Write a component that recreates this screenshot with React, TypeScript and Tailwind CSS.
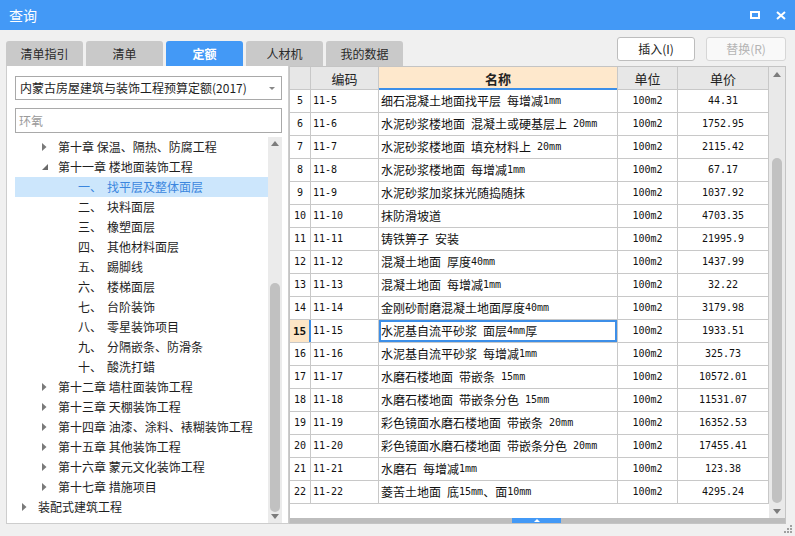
import React from "react";

const rows: [number, string, string, string][] = [
  [5, "11-5", "细石混凝土地面找平层 每增减1mm", "44.31"],
  [6, "11-6", "水泥砂浆楼地面 混凝土或硬基层上 20mm", "1752.95"],
  [7, "11-7", "水泥砂浆楼地面 填充材料上 20mm", "2115.42"],
  [8, "11-8", "水泥砂浆楼地面 每增减1mm", "67.17"],
  [9, "11-9", "水泥砂浆加浆抹光随捣随抹", "1037.92"],
  [10, "11-10", "抹防滑坡道", "4703.35"],
  [11, "11-11", "铸铁箅子 安装", "21995.9"],
  [12, "11-12", "混凝土地面 厚度40mm", "1437.99"],
  [13, "11-13", "混凝土地面 每增减1mm", "32.22"],
  [14, "11-14", "金刚砂耐磨混凝土地面厚度40mm", "3179.98"],
  [15, "11-15", "水泥基自流平砂浆 面层4mm厚", "1933.51"],
  [16, "11-16", "水泥基自流平砂浆 每增减1mm", "325.73"],
  [17, "11-17", "水磨石楼地面 带嵌条 15mm", "10572.01"],
  [18, "11-18", "水磨石楼地面 带嵌条分色 15mm", "11531.07"],
  [19, "11-19", "彩色镜面水磨石楼地面 带嵌条 20mm", "16352.53"],
  [20, "11-20", "彩色镜面水磨石楼地面 带嵌条分色 20mm", "17455.41"],
  [21, "11-21", "水磨石 每增减1mm", "123.38"],
  [22, "11-22", "菱苦土地面 底15mm、面10mm", "4295.24"],
];

type TreeRow =
  | { kind: "chapter"; label: string; open?: boolean }
  | { kind: "sub"; num: string; label: string; selected?: boolean }
  | { kind: "root"; label: string };

const tree: TreeRow[] = [
  { kind: "chapter", label: "第十章 保温、隔热、防腐工程" },
  { kind: "chapter", label: "第十一章 楼地面装饰工程", open: true },
  { kind: "sub", num: "一、", label: "找平层及整体面层", selected: true },
  { kind: "sub", num: "二、", label: "块料面层" },
  { kind: "sub", num: "三、", label: "橡塑面层" },
  { kind: "sub", num: "四、", label: "其他材料面层" },
  { kind: "sub", num: "五、", label: "踢脚线" },
  { kind: "sub", num: "六、", label: "楼梯面层" },
  { kind: "sub", num: "七、", label: "台阶装饰" },
  { kind: "sub", num: "八、", label: "零星装饰项目" },
  { kind: "sub", num: "九、", label: "分隔嵌条、防滑条" },
  { kind: "sub", num: "十、", label: "酸洗打蜡" },
  { kind: "chapter", label: "第十二章 墙柱面装饰工程" },
  { kind: "chapter", label: "第十三章 天棚装饰工程" },
  { kind: "chapter", label: "第十四章 油漆、涂料、裱糊装饰工程" },
  { kind: "chapter", label: "第十五章 其他装饰工程" },
  { kind: "chapter", label: "第十六章 蒙元文化装饰工程" },
  { kind: "chapter", label: "第十七章 措施项目" },
  { kind: "root", label: "装配式建筑工程" },
];

const tabs = ["清单指引", "清单", "定额", "人材机", "我的数据"];

// ascii runs get a fixed-width face, like the SimSun half-width glyphs in the grid
function Mono({ text }: { text: string }) {
  const parts = text.split(/([\x20-\x7e]+)/).filter((p) => p.length > 0);
  return (
    <>
      {parts.map((p, i) =>
        /^[\x20-\x7e]+$/.test(p) ? (
          <span key={i} className="whitespace-pre font-['DejaVu_Sans_Mono',monospace] text-[10px]">
            {p}
          </span>
        ) : (
          <span key={i}>{p}</span>
        )
      )}
    </>
  );
}

function ArrowRight() {
  return (
    <svg width="5" height="8" viewBox="0 0 5 8">
      <path d="M0 0L4.5 4L0 8Z" fill="#7a7a7a" />
    </svg>
  );
}

function ArrowOpen() {
  return (
    <svg width="6" height="6" viewBox="0 0 6 6">
      <path d="M6 0L6 6L0 6Z" fill="#6a6a6a" />
    </svg>
  );
}

function TriUp({ color = "#7c7c7c" }: { color?: string }) {
  return (
    <svg width="8" height="5" viewBox="0 0 8 5">
      <path d="M0 5L4 0L8 5Z" fill={color} />
    </svg>
  );
}

function TriDown() {
  return (
    <svg width="8" height="5" viewBox="0 0 8 5">
      <path d="M0 0L8 0L4 5Z" fill="#7c7c7c" />
    </svg>
  );
}

function TreeItem({ row }: { row: TreeRow }) {
  if (row.kind === "sub") {
    return (
      <div
        className={`flex h-[20px] items-center pl-[63px] ${
          row.selected ? "bg-[#cce6fc] text-[#3b86de]" : "text-[#1e1e1e]"
        }`}
      >
        <span className="inline-block w-[29px]">{row.num}</span>
        <span>{row.label}</span>
      </div>
    );
  }
  const isRoot = row.kind === "root";
  return (
    <div className={`flex h-[20px] items-center ${isRoot ? "pl-[7px]" : "pl-[27px]"}`}>
      <span className="flex w-[16px] items-center">
        {row.kind === "chapter" && row.open ? <ArrowOpen /> : <ArrowRight />}
      </span>
      <span className="whitespace-pre">{row.label}</span>
    </div>
  );
}

export default function App() {
  return (
    <div className="relative flex h-[536px] w-[795px] flex-col overflow-hidden bg-[#f0f0f0] font-['Noto_Sans_CJK_SC',sans-serif] text-[12px] leading-none text-[#1e1e1e]">
      {/* title bar */}
      <div className="flex h-[30px] shrink-0 items-center bg-[#4399f6] pl-[9px] pr-[9px] text-white">
        <span className="text-[14px]">查询</span>
        <div className="ml-auto flex items-center gap-[16px]">
          <svg width="10" height="8" viewBox="0 0 10 8">
            <rect x="1" y="1" width="8" height="6" fill="none" stroke="#fff" strokeWidth="2" />
          </svg>
          <svg width="10" height="9" viewBox="0 0 10 9">
            <path d="M1 1L9 8M9 1L1 8" stroke="#fff" strokeWidth="2" />
          </svg>
        </div>
      </div>

      {/* tabs + actions */}
      <div className="flex h-[36px] shrink-0 pl-[6px] pr-[9px]">
        <div className="mt-[11px] flex h-[25px] gap-[3px]">
          {tabs.map((t) => (
            <div
              key={t}
              className={`flex w-[77px] items-center justify-center rounded-t-[3px] ${
                t === "定额" ? "bg-[#4399f6] font-bold text-white" : "bg-[#c9c9c9] text-[#2a2a2a]"
              }`}
            >
              {t}
            </div>
          ))}
        </div>
        <div className="ml-auto mt-[7px] flex h-[24px] gap-[11px]">
          <button className="w-[78px] rounded-[3px] border border-[#bdbdbd] bg-white text-[12px] text-[#222]">
            插入(I)
          </button>
          <button className="w-[80px] rounded-[3px] border border-[#d6d6d6] bg-[#f9f9f9] text-[12px] text-[#b4b4b4]">
            替换(R)
          </button>
        </div>
      </div>

      {/* body */}
      <div className="flex h-[458px] shrink-0 pl-[6px]">
        {/* left panel */}
        <div className="flex w-[283px] flex-col border-x border-b border-[#cdcdcd] bg-white">
          <div className="ml-[8px] mr-[6px] mt-[10px] flex h-[24px] items-center border border-[#a9a9a9] pl-[4px] pr-[6px]">
            <span>内蒙古房屋建筑与装饰工程预算定额(2017)</span>
            <svg className="ml-auto" width="6" height="3" viewBox="0 0 6 3">
              <path d="M0 0L6 0L3 3Z" fill="#888" />
            </svg>
          </div>
          <div className="ml-[8px] mr-[6px] mt-[8px] flex h-[25px] items-center border border-[#a9a9a9] pl-[3px] text-[#9a9a9a]">
            环氧
          </div>
          <div className="ml-[8px] mr-[6px] mt-[4px] flex min-h-0 flex-1">
            <div className="flex-1">
              {tree.map((r, i) => (
                <TreeItem key={i} row={r} />
              ))}
            </div>
            <div className="flex w-[14px] flex-col items-center bg-[#ebebeb]">
              <div className="flex h-[12px] items-center">
                <TriUp />
              </div>
              <div className="h-[134px]" />
              <div className="h-[229px] w-[10px] rounded-full bg-[#c1c1c1]" />
              <div className="flex flex-1 items-end pb-[4px]">
                <TriDown />
              </div>
            </div>
          </div>
        </div>

        {/* grid */}
        <div className="flex w-[497px] flex-col border border-[#c4c4c4] bg-white">
          <div className="flex min-h-0 flex-1">
            <div className="flex w-[479px] flex-col">
              <div className="flex h-[23px] shrink-0 border-b border-[#c8c8c8] bg-[#e7e7e7] text-[13px] text-[#222]">
                <div className="w-[21px] border-r border-[#c8c8c8]" />
                <div className="flex w-[68px] items-center justify-center border-r border-[#c8c8c8]">编码</div>
                <div className="relative flex w-[239px] items-center justify-center border-r border-[#c8c8c8] bg-[#fee8cc] font-bold">
                  名称
                  <span className="absolute -bottom-px left-0 right-0 h-[2px] bg-[#3d8fe8]" />
                </div>
                <div className="flex w-[60px] items-center justify-center border-r border-[#c8c8c8]">单位</div>
                <div className="flex w-[91px] items-center justify-center border-r border-[#c8c8c8]">单价</div>
              </div>
              {rows.map(([n, code, name, price]) => {
                const sel = n === 15;
                return (
                  <div key={n} className="flex h-[23px] shrink-0 border-b border-[#c8c8c8] text-[12px] text-[#111]">
                    <div
                      className={`flex w-[21px] items-center justify-center border-r ${
                        sel ? "border-r-2 border-[#3d8fe8] bg-[#fde5c6] font-bold" : "border-[#c8c8c8]"
                      }`}
                    >
                      {sel ? <span className="font-['DejaVu_Sans_Mono',monospace] text-[11px]">{n}</span> : <Mono text={String(n)} />}
                    </div>
                    <div className="flex w-[68px] items-center border-r border-[#c8c8c8] pl-[2px]">
                      <Mono text={code} />
                    </div>
                    <div
                      className={`flex w-[239px] items-center whitespace-nowrap border-r border-[#c8c8c8] pl-[2px] ${
                        sel ? "shadow-[inset_0_0_0_2px_#3d8fe8]" : ""
                      }`}
                    >
                      <Mono text={name} />
                    </div>
                    <div className="flex w-[60px] items-center justify-center border-r border-[#c8c8c8]">
                      <Mono text="100m2" />
                    </div>
                    <div className="flex w-[91px] items-center justify-center border-r border-[#c8c8c8]">
                      <Mono text={price} />
                    </div>
                  </div>
                );
              })}
            </div>
            <div className="flex w-[16px] flex-col items-center bg-[#e9e9e9]">
              <div className="flex h-[14px] items-center">
                <TriUp />
              </div>
              <div className="h-[77px]" />
              <div className="h-[345px] w-[10px] rounded-full bg-[#c1c1c1]" />
              <div className="flex flex-1 items-end pb-[4px]">
                <TriDown />
              </div>
            </div>
          </div>
          <div className="flex h-[5px] shrink-0 bg-[#bdbdbd] pl-[222px]">
            <div className="flex h-[5px] w-[49px] items-center justify-center bg-[#4399f6]">
              <svg width="6" height="3" viewBox="0 0 6 3">
                <path d="M0 3L3 0L6 3Z" fill="#fff" />
              </svg>
            </div>
          </div>
        </div>
      </div>

      {/* resize grip */}
      <svg className="absolute bottom-[3px] right-[3px]" width="8" height="8" viewBox="0 0 8 8">
        <rect x="6" y="0" width="2" height="2" fill="#a0a0a0" />
        <rect x="3" y="3" width="2" height="2" fill="#a0a0a0" />
        <rect x="6" y="3" width="2" height="2" fill="#a0a0a0" />
        <rect x="0" y="6" width="2" height="2" fill="#a0a0a0" />
        <rect x="3" y="6" width="2" height="2" fill="#a0a0a0" />
        <rect x="6" y="6" width="2" height="2" fill="#a0a0a0" />
      </svg>
    </div>
  );
}
